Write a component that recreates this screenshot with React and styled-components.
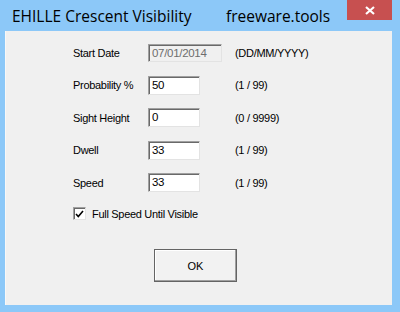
import React from "react";
import styled, { createGlobalStyle } from "styled-components";

const Global = createGlobalStyle`
	html, body {
		margin: 0;
		padding: 0;
		background: #8cc8f8;
	}
`;

const Window = styled.div`
	width: 400px;
	height: 312px;
	background: #8cc8f8;
	display: flex;
	flex-direction: column;
	box-sizing: border-box;
	padding: 0 8px 7px 5px;
	font-family: "Liberation Sans", Arial, sans-serif;
`;

const TitleBar = styled.div`
	height: 31px;
	display: flex;
	align-items: flex-start;
	font-family: "Open Sans", "Noto Sans", sans-serif;
	font-size: 15.5px;
	color: #000;
`;

const Title = styled.span`
	margin-top: 5px;
	margin-left: 7px;
	width: 214px;
	white-space: nowrap;
`;

const Brand = styled.span`
	margin-top: 5px;
	flex: 1;
	white-space: nowrap;
`;

const CloseButton = styled.div`
	width: 45px;
	height: 20px;
	background: #c75050;
	display: flex;
	align-items: center;
	justify-content: center;
`;

const Client = styled.div`
	flex: 1;
	background: #f0f0f0;
	border-left: 1px solid #f8f8f8;
	padding: 12px 0 0 67px;
	font-size: 11px;
	letter-spacing: -0.3px;
	color: #000;
`;

const Form = styled.div`
	display: grid;
	grid-template-columns: 75px 87px auto;
	grid-auto-rows: 19px;
	row-gap: 13.5px;
	align-items: center;
`;

const Label = styled.span`
	white-space: nowrap;
`;

const Field = styled.div`
	box-sizing: border-box;
	height: ${(p) => (p.$wide ? "18px" : "19px")};
	width: ${(p) => (p.$wide ? "74px" : "52px")};
	background: ${(p) => (p.$disabled ? "#f0f0f0" : "#fff")};
	color: ${(p) => (p.$disabled ? "#6d6d6d" : "#000")};
	border-style: solid;
	border-width: 1px;
	border-color: #a0a0a0 #e3e3e3 #e3e3e3 #a0a0a0;
	box-shadow: inset 1px 1px 0 #696969;
	padding: 2px 0 0 3px;
	font-size: 11.5px;
	line-height: 13px;
`;

const Hint = styled.span`
	white-space: nowrap;
`;

const CheckRow = styled.label`
	display: flex;
	align-items: center;
	gap: 6px;
	margin-top: 15px;
`;

const Box = styled.span`
	box-sizing: border-box;
	width: 13px;
	height: 13px;
	background: #fff;
	border-style: solid;
	border-width: 1px;
	border-color: #a0a0a0 #e3e3e3 #e3e3e3 #a0a0a0;
	box-shadow: inset 1px 1px 0 #696969;
	display: flex;
	align-items: center;
	justify-content: center;
`;

const OkButton = styled.button`
	display: block;
	margin: 29px 0 0 81px;
	width: 83px;
	height: 33px;
	background: #f2f2f2;
	border: 1px solid #646464;
	box-shadow: inset -1px -1px 0 #a0a0a0, inset 1px 1px 0 #fff;
	font-family: "Liberation Sans", Arial, sans-serif;
	font-size: 11px;
	color: #000;
	padding: 0;
`;

const rows = [
	{ label: "Start Date", value: "07/01/2014", hint: "(DD/MM/YYYY)", wide: true, disabled: true },
	{ label: "Probability %", value: "50", hint: "(1 / 99)" },
	{ label: "Sight Height", value: "0", hint: "(0 / 9999)" },
	{ label: "Dwell", value: "33", hint: "(1 / 99)" },
	{ label: "Speed", value: "33", hint: "(1 / 99)" },
];

export default function App() {
	return (
		<>
			<Global />
			<Window>
				<TitleBar>
					<Title>EHILLE Crescent Visibility</Title>
					<Brand>freeware.tools</Brand>
					<CloseButton>
						<svg width="10" height="9" viewBox="0 0 10 9">
							<path d="M1 1 L9 8 M9 1 L1 8" stroke="#fff" strokeWidth="2.2" />
						</svg>
					</CloseButton>
				</TitleBar>
				<Client>
					<Form>
						{rows.map((r) => (
							<React.Fragment key={r.label}>
								<Label>{r.label}</Label>
								<Field $wide={r.wide} $disabled={r.disabled}>
									{r.value}
								</Field>
								<Hint>{r.hint}</Hint>
							</React.Fragment>
						))}
					</Form>
					<CheckRow>
						<Box>
							<svg width="9" height="8" viewBox="0 0 9 8">
								<path d="M1 4 L3.3 6.5 L8 1" stroke="#000" strokeWidth="1.6" fill="none" />
							</svg>
						</Box>
						Full Speed Until Visible
					</CheckRow>
					<OkButton>OK</OkButton>
				</Client>
			</Window>
		</>
	);
}
